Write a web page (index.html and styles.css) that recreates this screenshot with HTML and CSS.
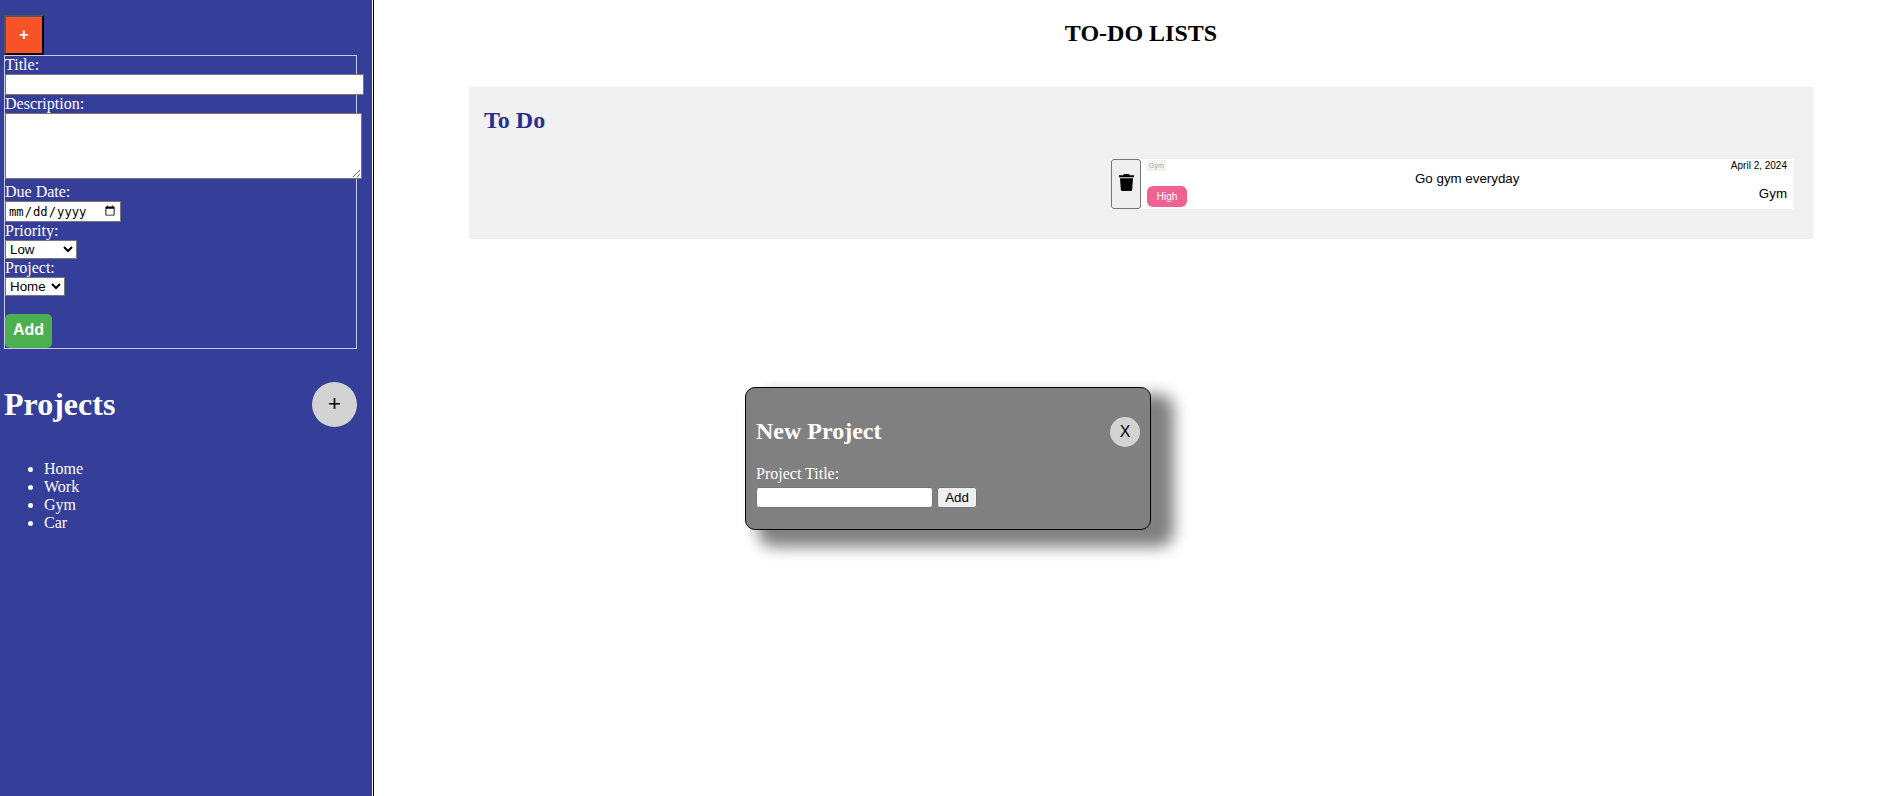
FILE: index.html
```html
<!DOCTYPE html>
<html lang="en">
<head>
<meta charset="utf-8">
<title>To-Do Lists</title>
<link rel="stylesheet" href="styles.css">
</head>
<body>
<div class="app">
  <aside class="sidebar">
    <button class="new-task">+</button>
    <form class="task-form">
      <label class="label">Title:</label>
      <input class="field title-input" type="text">
      <label class="label">Description:</label>
      <textarea class="field description-input"></textarea>
      <label class="label">Due Date:</label>
      <input class="field date-input" type="date">
      <label class="label">Priority:</label>
      <select class="field priority-select"><option>Low</option><option>Medium</option><option>High</option></select>
      <label class="label">Project:</label>
      <select class="field project-select"><option>Home</option><option>Work</option><option>Gym</option><option>Car</option></select>
      <button class="add-task" type="button">Add</button>
    </form>
    <div class="projects-head">
      <h1 class="projects-title">Projects</h1>
      <button class="add-project">+</button>
    </div>
    <ul class="projects">
      <li>Home</li>
      <li>Work</li>
      <li>Gym</li>
      <li>Car</li>
    </ul>
  </aside>
  <main class="main">
    <h2 class="page-title">TO-DO LISTS</h2>
    <section class="list">
      <h2 class="list-title">To Do</h2>
      <div class="task">
        <button class="delete" aria-label="Delete">
          <svg class="trash" viewBox="0 0 15 17"><path d="M0 1.2h4L5 0h5l1 1.2h4v2H0zM1 4.2h13l-.8 11.3q-.1 1.5-1.6 1.5H3.4q-1.500 0-1.600-1.500z"/></svg>
        </button>
        <div class="tags"><span class="tag">Gym</span><span class="priority">High</span></div>
        <div class="task-text">Go gym everyday</div>
        <div class="meta"><span class="date">April 2, 2024</span><span class="task-name">Gym</span></div>
      </div>
    </section>
  </main>
</div>
<div class="modal">
  <div class="modal-head">
    <h2 class="modal-title">New Project</h2>
    <button class="close">X</button>
  </div>
  <label class="modal-label">Project Title:</label>
  <div class="modal-row">
    <input class="modal-input" type="text">
    <button class="modal-add">Add</button>
  </div>
</div>
</body>
</html>
```
FILE: styles.css
```css
* { box-sizing: border-box; }
body {
  margin: 0;
  font: 16px/18px "Liberation Serif", serif;
  background: #fff;
}
button, input, select, textarea { font: 13.333px "Liberation Sans", sans-serif; }
.app { display: flex; height: 796px; overflow: hidden; }
.sidebar {
  width: 374px;
  flex: none;
  padding: 15px 15px 0 4px;
  color: #fff;
  background: #353e98;
  border-right: 1px solid #000;
  box-shadow: inset -1px 0 #fff;
}
.new-task {
  display: block;
  width: 40px;
  height: 40px;
  padding: 0 0 1px;
  color: #fff;
  background: #f85228;
  border: 2px outset #000;
  font-weight: bold;
  font-size: 16px;
}
.task-form {
  display: flex;
  flex-direction: column;
  align-items: flex-start;
  width: 353px;
  height: 294px;
  border: 1px solid #c8cbe6;
}
.label { height: 18px; line-height: 18px; }
.field { flex: none; margin: 0; color: #000; background: #fff; border: 1px solid #767676; border-radius: 0; }
.title-input { width: 359px; height: 21px; }
.description-input { width: 357px; height: 66px; margin-bottom: 4px; }
.date-input { width: 116px; height: 21px; padding: 0 2px; font: 12.2px monospace; }
.priority-select { width: 72px; height: 19px; }
.project-select { width: 60px; height: 19px; }
.add-task {
  width: 47px;
  height: 34px;
  margin-top: 18px;
  padding: 0 0 2px;
  color: #fff;
  background: #4caf50;
  border: 0;
  border-radius: 5px;
  font-weight: bold;
  font-size: 16px;
}
.projects-head {
  display: flex;
  justify-content: space-between;
  align-items: center;
  width: 353px;
  height: 45px;
  margin-top: 33px;
}
.projects-title { margin: 0; padding-bottom: 1px; font-size: 32px; line-height: 36px; }
.add-project {
  width: 45px;
  height: 45px;
  padding: 0 0 2px;
  color: #000;
  background: #d3d3d3;
  border: 0;
  border-radius: 50%;
  font-size: 22px;
}
.projects { margin: 33px 0 0; padding-left: 40px; }
.main { flex: 1; padding: 20px 75px 0 95px; }
.page-title { margin: 0; font-size: 24px; line-height: 27px; text-align: center; }
.list { height: 152px; margin-top: 40px; padding: 20px 20px 0 15px; background: #f1f1f1; }
.list-title { margin: 0; color: #28308d; font-size: 24px; line-height: 27px; }
.task {
  display: flex;
  width: 682px;
  height: 50px;
  margin: 25px 0 0 auto;
  background: #fff;
  font: 13.333px/16px "Liberation Sans", sans-serif;
}
.delete {
  display: flex;
  align-items: center;
  justify-content: center;
  width: 30px;
  height: 50px;
  padding: 0 0 3px 1px;
  background: #efefef;
  border: 1px solid #767676;
  border-radius: 3px;
}
.trash { width: 15px; height: 17px; }
.tags {
  display: flex;
  flex-direction: column;
  justify-content: space-between;
  align-items: flex-start;
  width: 60px;
  padding: 1px 0 2px 6px;
}
.tag { padding: 0 2px; color: #aaa; background: #f1f1f1; font-size: 7px; line-height: 11px; }
.priority { width: 40px; height: 21px; color: #fff; background: #f06292; border-radius: 6px; font-size: 10px; line-height: 21px; text-align: center; }
.task-text { flex: 1; padding: 12px 0 0 214px; }
.meta { display: flex; flex-direction: column; align-items: flex-end; padding: 1px 6px 0 0; }
.date { font-size: 10px; line-height: 12px; }
.task-name { margin-top: 14px; }
.modal {
  position: absolute;
  left: 745px;
  top: 387px;
  width: 406px;
  height: 143px;
  padding: 28px 10px 0;
  color: #fff;
  background: #808080;
  border: 1px solid #000;
  border-radius: 10px;
  box-shadow: 18px 12px 15px 5px #808080;
}
.modal-head { display: flex; justify-content: space-between; align-items: center; height: 31px; }
.modal-title { margin: 0; padding-bottom: 1px; font-size: 24px; line-height: 27px; }
.close {
  width: 30px;
  height: 30px;
  padding: 0;
  color: #000;
  background: #d3d3d3;
  border: 0;
  border-radius: 50%;
  font-size: 16px;
}
.modal-label { display: block; margin-top: 18px; }
.modal-row { display: flex; gap: 4px; margin-top: 4px; }
.modal-input { width: 177px; height: 21px; border: 1px solid #767676; border-radius: 3px; }
.modal-add { width: 40px; height: 21px; padding: 0; color: #000; background: #efefef; border: 1px solid #767676; border-radius: 3px; }
```
